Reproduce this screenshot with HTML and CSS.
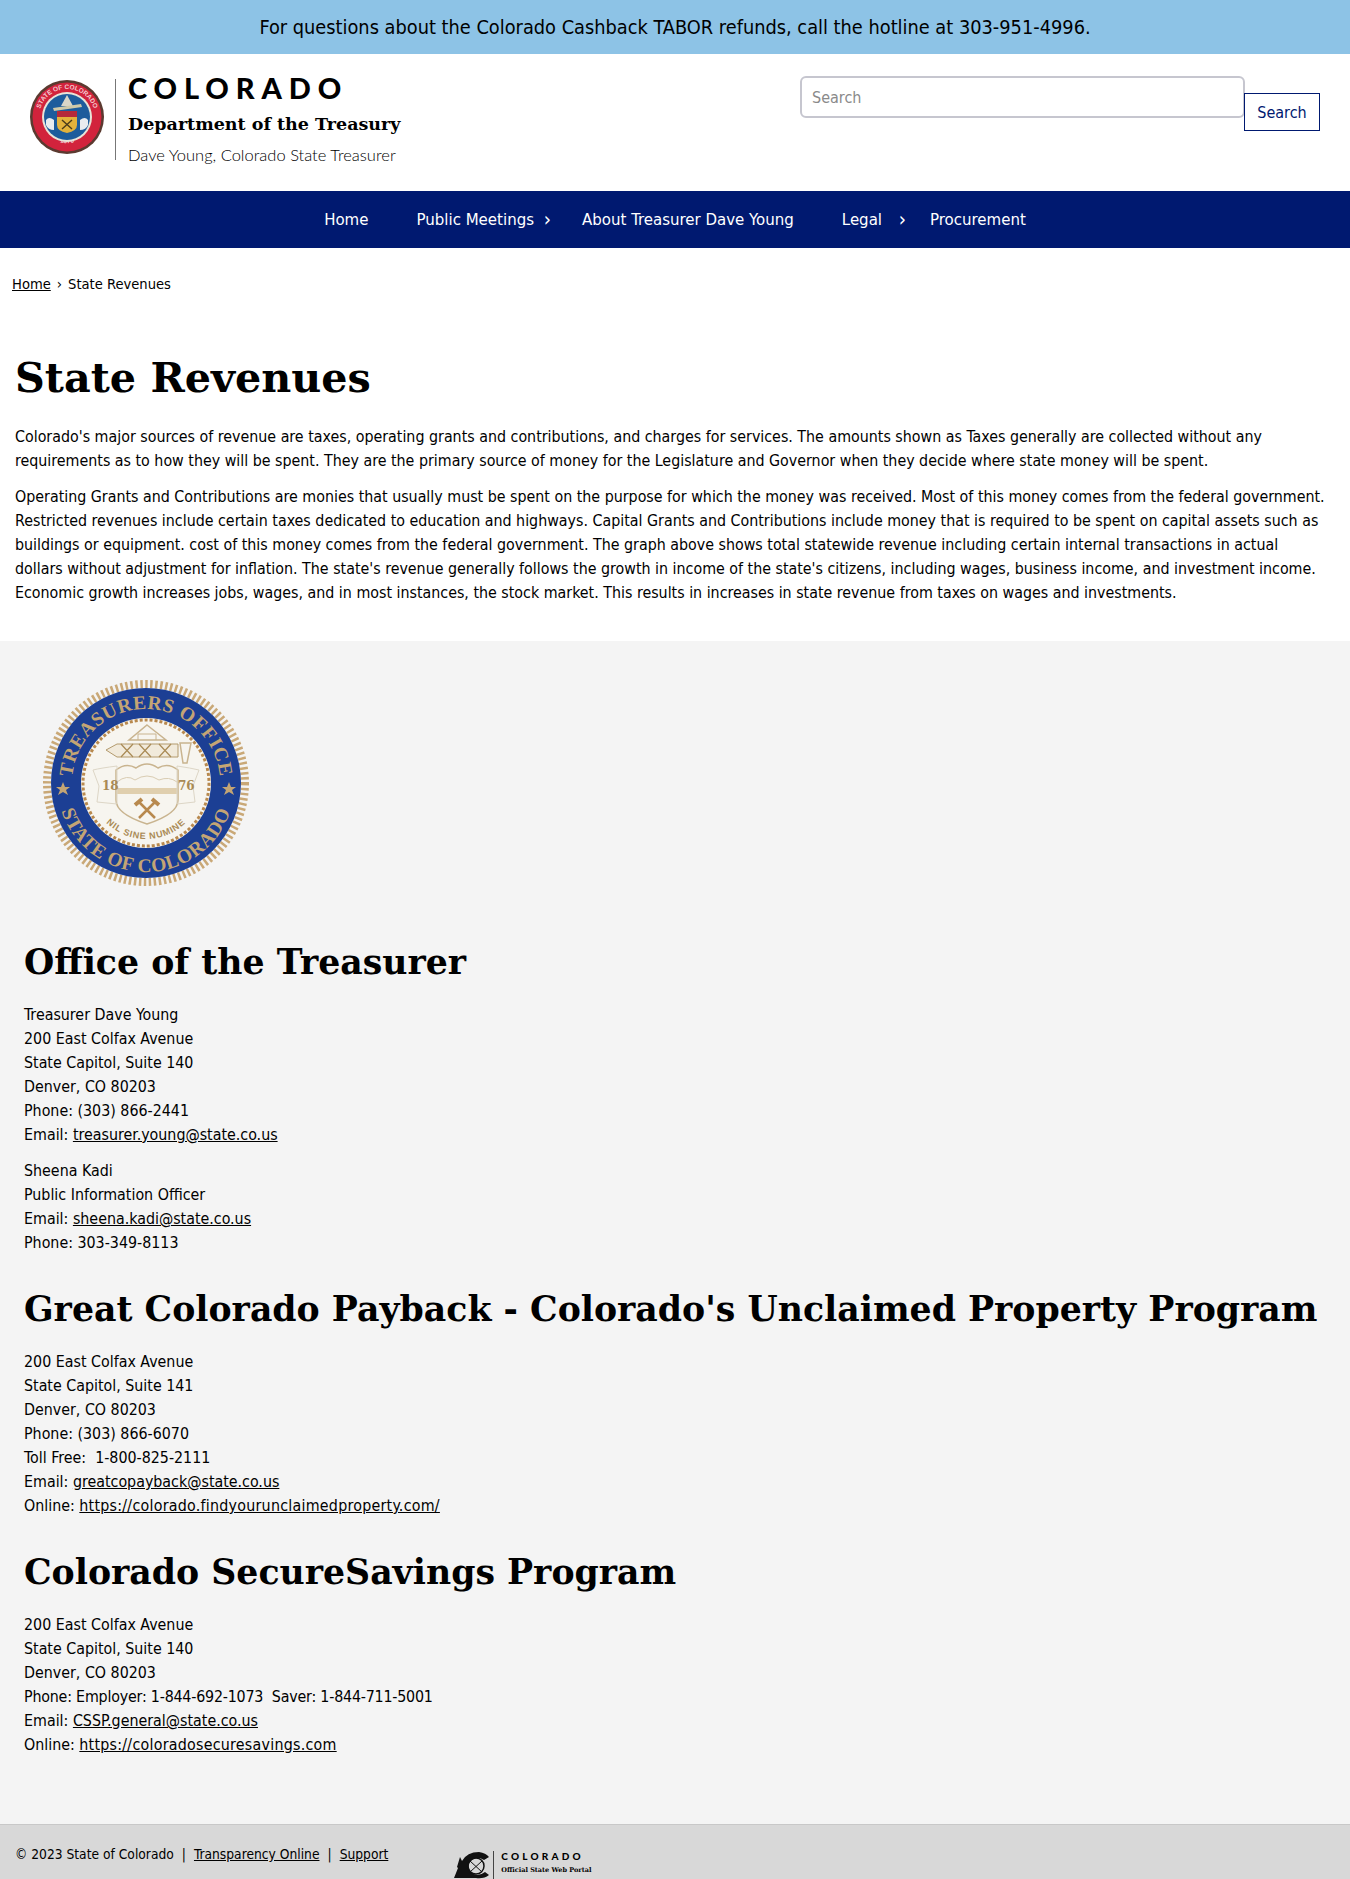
FILE: index.html
```html
<!DOCTYPE html>
<html lang="en">

<head>
    <meta charset="UTF-8">
    <meta name="viewport" content="width=device-width, initial-scale=1.0">
    <title>State Revenues</title>
    <link rel="stylesheet" href="styles.css">
</head>

<body>
    <div class="alert">For questions about the Colorado Cashback TABOR refunds, call the hotline at 303-951-4996.</div>

    <header class="site-header">
        <a href="#" class="brand">
            <svg class="brand-seal" viewBox="0 0 76 76" width="76" height="76" aria-hidden="true">
                <defs>
                    <path id="miniTop" d="M 10 38 A 28 28 0 0 1 66 38"/>
                    <path id="miniBottom" d="M 20 57 A 26 26 0 0 0 56 57"/>
                </defs>
                <circle cx="38" cy="38" r="37" fill="#5b3a30"/>
                <circle cx="38" cy="38" r="34.5" fill="#d2233c"/>
                <text class="mini-ring"><textPath href="#miniTop" startOffset="50%" text-anchor="middle">STATE OF COLORADO</textPath></text>
                <text class="mini-year"><textPath href="#miniBottom" startOffset="50%" text-anchor="middle">1876</textPath></text>
                <circle cx="38" cy="38" r="25" fill="#e8e4d8"/>
                <circle cx="38" cy="38" r="23" fill="#1d5c9c"/>
                <path d="M38 16 L44 27 H32 Z" fill="#d9d6c8"/>
                <path d="M24 29 L52 25 L53 28 L25 32 Z" fill="#cfc9a8"/>
                <rect x="28" y="32" width="20" height="6" fill="#b5293a"/>
                <path d="M28 38 H48 V46 Q48 52 38 54 Q28 52 28 46 Z" fill="#e3b23c"/>
                <path d="M17 41 Q20 37 25 41 V51 Q19 51 17 46 Z" fill="#e9ecef"/>
                <path d="M59 41 Q56 37 51 41 V51 Q57 51 59 46 Z" fill="#e9ecef"/>
                <path d="M33 41 L43 50 M43 41 L33 50" stroke="#4a3a1a" stroke-width="1.4"/>
            </svg>
            <span class="brand-rule"></span>
            <span class="brand-text">
                <span class="brand-state">COLORADO</span>
                <span class="brand-dept">Department of the Treasury</span>
                <span class="brand-person">Dave Young, Colorado State Treasurer</span>
            </span>
        </a>
        <form class="search">
            <input class="search-input" type="text" placeholder="Search">
            <button class="search-btn" type="button">Search</button>
        </form>
    </header>

    <nav class="main-nav">
        <a href="#">Home</a>
        <a href="#" class="has-sub tight">Public Meetings</a>
        <a href="#">About Treasurer Dave Young</a>
        <a href="#" class="has-sub">Legal</a>
        <a href="#">Procurement</a>
    </nav>

    <div class="crumbs"><a href="#">Home</a><span class="crumb-sep">›</span>State Revenues</div>

    <main class="content">
        <h1>State Revenues</h1>
        <p>Colorado's major sources of revenue are taxes, operating grants and contributions, and charges for services. The amounts shown as Taxes generally are collected without any requirements as to how they will be spent. They are the primary source of money for the Legislature and Governor when they decide where state money will be spent.</p>
        <p>Operating Grants and Contributions are monies that usually must be spent on the purpose for which the money was received. Most of this money comes from the federal government. Restricted revenues include certain taxes dedicated to education and highways. Capital Grants and Contributions include money that is required to be spent on capital assets such as buildings or equipment. cost of this money comes from the federal government. The graph above shows total statewide revenue including certain internal transactions in actual dollars without adjustment for inflation. The state's revenue generally follows the growth in income of the state's citizens, including wages, business income, and investment income. Economic growth increases jobs, wages, and in most instances, the stock market. This results in increases in state revenue from taxes on wages and investments.</p>
    </main>

    <section class="contact">
        <svg class="office-seal" viewBox="0 0 210 210" width="210" height="210" aria-hidden="true">
            <defs>
                <path id="arcTop" d="M 31 105 A 74 74 0 0 1 179 105"/>
                <path id="arcBottom" d="M 16 105 A 89 89 0 0 0 194 105"/>
                <path id="arcMotto" d="M 52 125 A 57 57 0 0 0 158 125"/>
            </defs>
            <circle cx="105" cy="105" r="99" fill="none" stroke="#c9a877" stroke-width="8" stroke-dasharray="2.5 2.5"/>
            <circle cx="105" cy="105" r="95" fill="#1c3f94"/>
            <circle cx="105" cy="105" r="65" fill="#f7f5ef"/>
            <circle cx="105" cy="105" r="63" fill="none" stroke="#b8894e" stroke-width="3" stroke-dasharray="3 2"/>
            <text class="seal-ring"><textPath href="#arcTop" startOffset="50%" text-anchor="middle">TREASURERS OFFICE</textPath></text>
            <text class="seal-ring"><textPath href="#arcBottom" startOffset="50%" text-anchor="middle">STATE OF COLORADO</textPath></text>
            <path d="M22 104 l2 5 5 0 -4 3 2 5 -5 -3 -5 3 2 -5 -4 -3 5 0z" fill="#c4a574"/>
            <path d="M188 104 l2 5 5 0 -4 3 2 5 -5 -3 -5 3 2 -5 -4 -3 5 0z" fill="#c4a574"/>
            <path d="M106 47 L125 62 H88 Z" fill="none" stroke="#c9b48f" stroke-width="1.5"/>
            <path d="M97 62 V56 H115 V62" fill="none" stroke="#c9b48f"/>
            <path d="M65 72 L76 66 H137 V79 H76 Z" fill="#f1eadb" stroke="#b39a6d"/>
            <path d="M80 66 L92 79 M92 66 L80 79 M98 66 L110 79 M110 66 L98 79 M118 66 L130 79 M130 66 L118 79" stroke="#a98a55" stroke-width="1.2"/>
            <path d="M139 65 L150 65 L146 85 H142 Z" fill="none" stroke="#c9b48f" stroke-width="1.5"/>
            <path d="M75 92 Q85 84 95 90 Q106 82 117 90 Q127 84 137 92 V122 Q137 136 106 146 Q75 136 75 122 Z" fill="none" stroke="#c9b48f" stroke-width="1.5"/>
            <path d="M76 104 Q86 96 94 102 Q106 94 118 102 Q128 98 136 104" fill="none" stroke="#d9ccb2"/>
            <rect x="76" y="110" width="60" height="6" fill="#e0cfae"/>
            <path d="M76 88 Q60 90 52 92 L58 108 L56 124 L76 126 Z" fill="none" stroke="#ddd6c6"/>
            <path d="M136 88 Q150 90 158 92 L152 108 L154 124 L136 126 Z" fill="none" stroke="#ddd6c6"/>
            <text class="seal-year" x="61" y="112">18</text>
            <text class="seal-year" x="137" y="112">76</text>
            <path d="M98 124 L114 140 M114 124 L98 140" stroke="#b8894e" stroke-width="2.5"/>
            <path d="M94 127 L101 121 M118 127 L111 121" stroke="#b8894e" stroke-width="4"/>
            <text class="seal-motto"><textPath href="#arcMotto" startOffset="50%" text-anchor="middle">NIL SINE NUMINE</textPath></text>
        </svg>

        <h2>Office of the Treasurer</h2>
        <p>Treasurer Dave Young<br>200 East Colfax Avenue<br>State Capitol, Suite 140<br>Denver, CO 80203<br>Phone: (303) 866-2441<br>Email: <a href="#">treasurer.young@state.co.us</a></p>
        <p>Sheena Kadi<br>Public Information Officer<br>Email: <a href="#">sheena.kadi@state.co.us</a><br>Phone: 303-349-8113</p>

        <h2>Great Colorado Payback - Colorado's Unclaimed Property Program</h2>
        <p>200 East Colfax Avenue<br>State Capitol, Suite 141<br>Denver, CO 80203<br>Phone: (303) 866-6070<br>Toll Free:&nbsp; 1-800-825-2111<br>Email: <a href="#">greatcopayback@state.co.us</a><br>Online: <a href="#" class="url">https://colorado.findyourunclaimedproperty.com/</a></p>

        <h2>Colorado SecureSavings Program</h2>
        <p>200 East Colfax Avenue<br>State Capitol, Suite 140<br>Denver, CO 80203<br><span class="phones">Phone: Employer: 1-844-692-1073&nbsp; Saver: 1-844-711-5001</span><br>Email: <a href="#">CSSP.general@state.co.us</a><br>Online: <a href="#" class="url">https://coloradosecuresavings.com</a></p>
    </section>

    <footer class="site-footer">
        <div class="legal">© 2023 State of Colorado<span class="pipe">|</span><a href="#">Transparency Online</a><span class="pipe">|</span><a href="#">Support</a></div>
        <div class="portal">
            <svg class="portal-mark" viewBox="0 0 36 30" width="36" height="30" aria-hidden="true">
                <path d="M0 27 L4 17 L3 16 L6 6 L8 10 Q13 1 25 1 Q32 2 35 6 L30 9 Q24 5 18 9 Q12 14 17 21 Q23 27 31 21 L35 24 Q30 28 22 27 Z" fill="#111"/>
                <circle cx="22" cy="15" r="8" fill="none" stroke="#111" stroke-width="1.5"/>
                <path d="M16 10 L28 21 M28 10 L16 21" stroke="#111" stroke-width="1"/>
            </svg>
            <span class="portal-rule"></span>
            <span class="portal-text">
                <span class="portal-state">COLORADO</span>
                <span class="portal-sub">Official State Web Portal</span>
            </span>
        </div>
    </footer>
</body>

</html>
```

FILE: styles.css
```css
* {
    box-sizing: border-box;
}

body {
    margin: 0;
    background: #fff;
    color: #000;
    font-family: "DejaVu Sans Condensed", "DejaVu Sans", sans-serif;
    font-size: 15.85px;
    line-height: 24px;
}

a {
    color: #000;
}

.alert {
    height: 54px;
    padding-top: 1px;
    background: #8dc3e6;
    text-align: center;
    font-size: 19.8px;
    line-height: 54px;
}

.site-header {
    display: flex;
    justify-content: space-between;
    height: 137px;
    padding: 25px 30px 0 29px;
}

.brand {
    display: flex;
    align-items: flex-start;
    text-decoration: none;
    color: #000;
}

.brand-rule {
    width: 1px;
    height: 81px;
    margin: 0 12px 0 10px;
    background: #777;
}

.brand-text {
    display: flex;
    flex-direction: column;
}

.brand-state {
    margin-top: -3px;
    font-family: "Lato", sans-serif;
    font-weight: 900;
    font-size: 29px;
    line-height: 24px;
    letter-spacing: 6.9px;
}

.brand-dept {
    margin-top: 12px;
    font-family: "DejaVu Serif", serif;
    font-weight: bold;
    font-size: 17.5px;
    line-height: 24px;
}

.brand-person {
    margin-top: 7px;
    font-family: "Lato", sans-serif;
    font-weight: 300;
    font-size: 16.5px;
    line-height: 24px;
}

.mini-ring {
    font-family: "Liberation Sans", sans-serif;
    font-weight: bold;
    font-size: 6.5px;
    fill: #f3c9cf;
}

.mini-year {
    font-family: "Liberation Sans", sans-serif;
    font-weight: bold;
    font-size: 6.5px;
    fill: #f3c9cf;
}

.search {
    display: flex;
    align-items: flex-start;
    margin-top: -3px;
}

.search-input {
    width: 445px;
    height: 42px;
    padding: 0 10px;
    border: 2px solid #c6c6cf;
    border-radius: 6px;
    font-family: inherit;
    font-size: 16px;
}

.search-input::placeholder {
    color: #8a8a8a;
}

.search-btn {
    width: 76px;
    height: 38px;
    margin-top: 17px;
    margin-left: -1px;
    border: 1px solid #001970;
    background: #fff;
    color: #001970;
    font-family: inherit;
    font-size: 16px;
}

.main-nav {
    display: flex;
    justify-content: center;
    height: 57px;
    background: #001970;
}

.main-nav a {
    padding: 0 24px;
    color: #fff;
    font-size: 16.7px;
    text-decoration: none;
    line-height: 57px;
}

.main-nav .has-sub {
    position: relative;
}

.main-nav .has-sub::after {
    content: "›";
    position: absolute;
    right: 0;
    top: 0;
    font-size: 20px;
}

.main-nav .tight::after {
    right: 7px;
}

.crumbs {
    padding: 24px 12px 0;
    font-size: 14.6px;
}

.crumb-sep {
    margin: 0 6px;
}

.content {
    padding: 50px 22px 36px 15px;
}

h1,
h2 {
    margin: 0;
    font-family: "DejaVu Serif", serif;
    font-weight: bold;
}

h1 {
    font-size: 41.3px;
    line-height: 64px;
    margin-bottom: 15px;
}

p {
    margin: 0 0 12px;
}

.content p:last-child {
    margin-bottom: 0;
}

.contact {
    padding: 37px 24px 55px;
    background: #f4f4f4;
}

.office-seal {
    display: block;
    margin-left: 17px;
}

.seal-ring {
    font-family: "Liberation Serif", serif;
    font-weight: bold;
    font-size: 19.5px;
    letter-spacing: 0.6px;
    fill: #c4a574;
}

.seal-year {
    font-family: "DejaVu Serif", serif;
    font-weight: bold;
    font-size: 12px;
    fill: #a98a55;
}

.seal-motto {
    font-family: "Liberation Sans", sans-serif;
    font-weight: bold;
    font-size: 9px;
    letter-spacing: 0.8px;
    fill: #a98a55;
}

h2 {
    font-size: 34.7px;
    line-height: 48px;
    margin: 50px 0 17px;
}

.contact p + h2 {
    margin-top: 30px;
}

.url {
    letter-spacing: 0.25px;
}

.phones {
    letter-spacing: -0.2px;
}

.site-footer {
    display: flex;
    gap: 66px;
    height: 57px;
    padding: 17px 15px 0;
    background: #d8d8d8;
    border-top: 1px solid #c8c8c8;
    border-bottom: 2px solid #8dc3e6;
    font-size: 13.7px;
    overflow: hidden;
}

.pipe {
    margin: 0 8px;
}

.portal {
    display: flex;
    align-items: flex-start;
    margin-top: 9px;
}

.portal-rule {
    width: 1px;
    height: 30px;
    margin: 0 7px 0 3px;
    background: #444;
}

.portal-text {
    display: flex;
    flex-direction: column;
    margin-top: -2px;
}

.portal-state {
    font-family: "Lato", sans-serif;
    font-weight: 900;
    font-size: 10px;
    line-height: 14px;
    letter-spacing: 3.2px;
}

.portal-sub {
    margin-top: 2px;
    font-family: "DejaVu Serif", serif;
    font-weight: bold;
    font-size: 6.5px;
    line-height: 10px;
}
```
